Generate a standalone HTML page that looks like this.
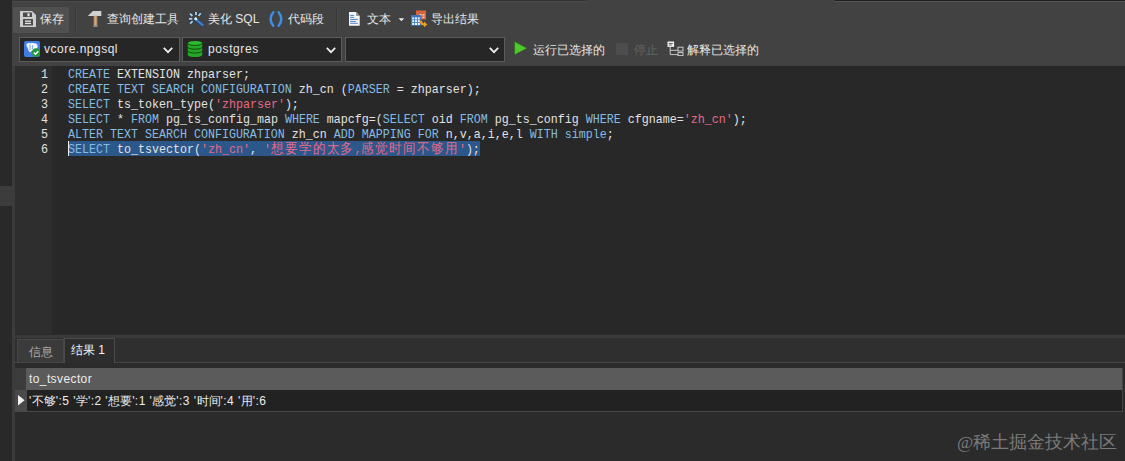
<!DOCTYPE html>
<html><head><meta charset="utf-8">
<style>
*{margin:0;padding:0;box-sizing:border-box}
html,body{width:1125px;height:461px;overflow:hidden;background:#2b2b2b;font-family:"Liberation Sans",sans-serif;position:relative}
.abs{position:absolute}
svg{position:absolute;display:block}
#left{left:0;top:0;width:12px;height:461px;background:#292929}
#leftthumb{left:0;top:186px;width:12px;height:20px;background:#3c3c3c}
#leftline{left:12px;top:0;width:3px;height:461px;background:#3b3b3b}
#tb{left:12px;top:0;width:1113px;height:66px;background:#424242}
#tbtop{left:12px;top:0;width:574px;height:1px;background:#333333;box-shadow:0 1px 0 #4a4a4a}
#tbtop2{left:835px;top:0;width:290px;height:1px;background:#1e1e1e;box-shadow:0 1px 0 #555}
.t{position:absolute;color:#e6e6e6;font-size:12px;line-height:14px;white-space:nowrap}
#save{left:13px;top:7px;width:56px;height:26px;background:#505050}
.sep{position:absolute;top:7px;width:1px;height:26px;background:#393939;box-shadow:1px 0 0 #484848}
.combo{position:absolute;top:37px;height:25px;background:#262626;border:1px solid #5c5c5c}
.chev{position:absolute;top:5px;width:7px;height:7px;border-right:1.5px solid #dcdcdc;border-bottom:1.5px solid #dcdcdc;transform:rotate(45deg)}
#editor{left:15px;top:66px;width:1110px;height:269px;background:#282828}
#gutter{left:15px;top:66px;width:37px;height:269px;background:#2e2e2e}
.code{position:absolute;left:68px;font-family:"Liberation Mono",monospace;font-size:11.67px;line-height:15px;color:#e2e2e2;white-space:pre;transform:scaleY(1.12);transform-origin:0 0}
.ln{position:absolute;left:41px;font-family:"Liberation Mono",monospace;font-size:11.67px;line-height:15px;color:#e2e2e2;transform:scaleY(1.12);transform-origin:0 0}
.k{color:#84bce4}
.s{color:#e5698a}
i.a{font-style:normal;letter-spacing:0.45px}
.cj{font-size:12.5px;letter-spacing:0.92px}
#bottom{left:15px;top:334px;width:1110px;height:127px;background:#2b2b2b}
#band{left:15px;top:335px;width:1110px;height:3px;background:#3a3a3a}
#tabstrip{left:15px;top:338px;width:1110px;height:24px;background:#2f2f2f}
</style></head><body>
<div class="abs" id="left"></div>
<div class="abs" id="leftthumb"></div>
<div class="abs" id="leftline"></div>
<div class="abs" id="tb"></div>
<div class="abs" id="tbtop"></div>
<div class="abs" id="tbtop2"></div>
<div class="abs" id="save"></div>

<!-- floppy -->
<svg style="left:20px;top:11px" width="16" height="16" viewBox="0 0 16 16">
<path d="M0 0H12L16 4V16H0Z" fill="#cdcdcd"/>
<rect x="3" y="1.5" width="9" height="4.5" fill="#4c4c4c"/>
<rect x="7.5" y="2.3" width="2" height="3" fill="#eeeeee"/>
<rect x="3" y="8" width="10" height="6.5" fill="#4c4c4c"/>
<rect x="5" y="9.5" width="6" height="1.3" fill="#e8e8e8"/>
<rect x="5" y="11.8" width="6" height="1.3" fill="#e8e8e8"/>
</svg>
<div class="t" style="left:40px;top:12px">保存</div>
<div class="sep" style="left:75px"></div>

<!-- hammer -->
<svg style="left:88px;top:11px" width="14" height="16" viewBox="0 0 14 16">
<path d="M0 4.8L5 0H13.3V4.9H0Z" fill="#d2d2d2"/>
<rect x="5.6" y="4.9" width="3.8" height="10.9" fill="#a98660"/>
<rect x="6.4" y="4.9" width="2" height="10.9" fill="#cfa878"/>
<rect x="5.6" y="14.3" width="3.8" height="1.7" fill="#8a8a8a"/>
</svg>
<div class="t" style="left:107px;top:12px">查询创建工具</div>

<!-- wand -->
<svg style="left:184px;top:6px" width="24" height="24" viewBox="0 0 24 24">
<g stroke="#1c2a38" stroke-width="3.4" stroke-linecap="butt" opacity="0.6">
<line x1="12" y1="6" x2="12" y2="9"/>
<line x1="5" y1="12.8" x2="8.3" y2="12.8"/>
<line x1="6" y1="7.6" x2="8.4" y2="10"/>
<line x1="16.8" y1="7.4" x2="14.4" y2="9.8"/>
<line x1="6.2" y1="17.6" x2="8.6" y2="15.2"/>
</g>
<g stroke="#a6d2f0" stroke-width="1.9" stroke-linecap="butt">
<line x1="12" y1="6" x2="12" y2="9"/>
<line x1="5" y1="12.8" x2="8.3" y2="12.8"/>
<line x1="6" y1="7.6" x2="8.4" y2="10"/>
<line x1="16.8" y1="7.4" x2="14.4" y2="9.8"/>
<line x1="6.2" y1="17.6" x2="8.6" y2="15.2"/>
</g>
<line x1="10.6" y1="12.2" x2="19.2" y2="19.6" stroke="#1a3350" stroke-width="3.8"/>
<line x1="10.6" y1="12.2" x2="19.2" y2="19.6" stroke="#3b7fcc" stroke-width="2.6"/>
<circle cx="11.8" cy="12.8" r="1.5" fill="#e4f4ff"/>
</svg>
<div class="t" style="left:208px;top:12px">美化 SQL</div>

<!-- parens -->
<svg style="left:262px;top:6px" width="28" height="24" viewBox="0 0 28 24">
<path d="M11.3 6.2Q5.8 13 11.3 19.8" stroke="#3d8fe4" stroke-width="2.5" stroke-linecap="round" fill="none"/>
<path d="M16.6 6.2Q22.1 13 16.6 19.8" stroke="#3d8fe4" stroke-width="2.5" stroke-linecap="round" fill="none"/>
</svg>
<div class="t" style="left:288px;top:12px">代码段</div>
<div class="sep" style="left:336px"></div>

<!-- doc -->
<svg style="left:349px;top:12px" width="11" height="14" viewBox="0 0 11 14">
<path d="M0 0H7L10.7 3.9V13.8H0Z" fill="#f4f6f8"/>
<path d="M7 0V3.9H10.7Z" fill="#9a9a9a"/>
<g fill="#4c86c6">
<rect x="1.1" y="2.9" width="4" height="1"/>
<rect x="1.1" y="4.9" width="4" height="1"/>
<rect x="1.1" y="6.9" width="7.8" height="1"/>
<rect x="1.1" y="8.9" width="5.8" height="1"/>
<rect x="1.1" y="10.8" width="7.8" height="1"/>
</g>
</svg>
<div class="t" style="left:367px;top:12px">文本</div>
<svg style="left:398px;top:18px" width="7" height="4" viewBox="0 0 7 4"><path d="M0.6 0.2H6.2L3.4 3.2Z" fill="#ececec"/></svg>

<!-- export -->
<svg style="left:410px;top:10px" width="18" height="17" viewBox="0 0 18 17">
<rect x="6" y="0.5" width="10" height="9" fill="#d9643c"/>
<g fill="#f2d0c0"><rect x="9.5" y="4" width="2" height="1.6"/><rect x="12.5" y="4" width="2" height="1.6"/><rect x="12.5" y="6.6" width="2" height="1.6"/></g>
<rect x="1" y="5" width="9.8" height="10.8" fill="#3b78c4"/>
<g fill="#e8f4ff">
<rect x="2.2" y="7.4" width="2" height="2"/><rect x="5" y="7.4" width="2" height="2"/><rect x="7.8" y="7.4" width="2" height="2"/>
<rect x="2.2" y="10.2" width="2" height="2"/><rect x="5" y="10.2" width="2" height="2"/><rect x="7.8" y="10.2" width="2" height="2"/>
<rect x="2.2" y="13" width="2" height="2"/><rect x="5" y="13" width="2" height="2"/><rect x="7.8" y="13" width="2" height="2"/>
</g>
<path d="M11 10.8Q11 14.6 14.6 14.6" stroke="#f0a020" stroke-width="2.2" fill="none"/><path d="M14 11.6L17.4 14.6L14 17.2Z" fill="#f0a020"/>
</svg>
<div class="t" style="left:431px;top:12px">导出结果</div>

<!-- combos -->
<div class="combo" style="left:19px;width:161px"><svg style="left:143px;top:9px" width="10" height="7" viewBox="0 0 10 7"><path d="M0.8 0.8L5 5.2L9.2 0.8" stroke="#f0f0f0" stroke-width="1.7" fill="none"/></svg></div>
<svg style="left:24px;top:41px" width="16" height="16" viewBox="0 0 16 16">
<rect x="0" y="0" width="16" height="16" rx="2" fill="#3f7de6"/>
<path d="M2.5 3Q4 1.5 6.5 2.2Q8 1.5 10 2.3Q13 2 13.6 4.5Q14 6 12.5 8L10 9.5Q8.5 11 7.5 10Q6.5 12 5.5 11Q4 9 3.5 6.5Q2 5 2.5 3Z" fill="#f2f6fc"/>
<path d="M6 3.5V9M8.4 4.2V8.2" stroke="#5a8fe0" stroke-width="0.8"/>
<circle cx="12" cy="11.6" r="4.3" fill="#1f9a3a"/>
<path d="M9.8 11.6L11.4 13.2L14.3 10.2" stroke="#ffffff" stroke-width="1.5" fill="none"/>
</svg>
<div class="t" style="left:44px;top:42px;letter-spacing:0.5px">vcore.npgsql</div>

<div class="combo" style="left:182px;width:160px"><svg style="left:143px;top:9px" width="10" height="7" viewBox="0 0 10 7"><path d="M0.8 0.8L5 5.2L9.2 0.8" stroke="#f0f0f0" stroke-width="1.7" fill="none"/></svg></div>
<svg style="left:187px;top:41px" width="16" height="17" viewBox="0 0 16 17">
<path d="M0.8 2.3A7.2 2.3 0 0 1 15.2 2.3V13.8A7.2 2.3 0 0 1 0.8 13.8Z" fill="#23a823"/>
<ellipse cx="8" cy="2.3" rx="7.2" ry="2.1" fill="#2fbd2f"/>
<g stroke="#0f400f" stroke-width="0.9" fill="none">
<path d="M0.8 2.3A7.2 2.1 0 0 0 15.2 2.3"/>
<path d="M0.8 6.1A7.2 2.1 0 0 0 15.2 6.1"/>
<path d="M0.8 9.9A7.2 2.1 0 0 0 15.2 9.9"/>
</g>
</svg>
<div class="t" style="left:208px;top:42px;letter-spacing:0.6px">postgres</div>

<div class="combo" style="left:345px;width:160px"><svg style="left:143px;top:9px" width="10" height="7" viewBox="0 0 10 7"><path d="M0.8 0.8L5 5.2L9.2 0.8" stroke="#f0f0f0" stroke-width="1.7" fill="none"/></svg></div>

<svg style="left:514px;top:41px" width="14" height="15" viewBox="0 0 14 15">
<path d="M0.6 0.6L13 7.2L0.6 13.8Z" fill="#52c830" stroke="#2a6a18" stroke-width="0.6"/>
</svg>
<div class="t" style="left:533px;top:43px">运行已选择的</div>
<div class="abs" style="left:616px;top:43px;width:12px;height:12px;background:#4d4d4d"></div>
<div class="t" style="left:634px;top:43px;color:#646464">停止</div>

<svg style="left:667px;top:41px" width="17" height="15" viewBox="0 0 17 15">
<rect x="0.5" y="0.5" width="6.6" height="5.4" fill="#f0f0f0"/>
<rect x="1.8" y="2" width="4" height="0.9" fill="#555"/>
<rect x="1.8" y="3.6" width="3" height="0.9" fill="#555"/>
<path d="M3.2 6V13.6H11M3.2 9.3H11" stroke="#d8d8d8" stroke-width="0.9" fill="none"/>
<rect x="11" y="6.2" width="5" height="3.8" fill="none" stroke="#d8d8d8" stroke-width="0.9"/>
<rect x="11" y="11.6" width="5" height="3" fill="none" stroke="#d8d8d8" stroke-width="0.9"/>
</svg>
<div class="t" style="left:687px;top:43px">解释已选择的</div>

<div class="abs" id="editor"></div>
<div class="abs" id="gutter"></div>

<div class="ln" style="top:67px">1</div>
<div class="ln" style="top:82px">2</div>
<div class="ln" style="top:97px">3</div>
<div class="ln" style="top:112px">4</div>
<div class="ln" style="top:127px">5</div>
<div class="ln" style="top:142px">6</div>

<div class="code" style="top:67px"><span class="k">CREATE</span> EXTENSION zhparser;</div>
<div class="code" style="top:82px"><span class="k">CREATE TEXT SEARCH CONFIGURATION</span> zh_cn (<span class="k">PARSER</span> = zhparser);</div>
<div class="code" style="top:97px"><span class="k">SELECT</span> ts_token_type(<span class="s">'zhparser'</span>);</div>
<div class="code" style="top:112px"><span class="k">SELECT</span> * <span class="k">FROM</span> pg_ts_config_map <span class="k">WHERE</span> mapcfg=(<span class="k">SELECT</span> oid <span class="k">FROM</span> pg_ts_config <span class="k">WHERE</span> cfgname=<span class="s">'zh_cn'</span>);</div>
<div class="code" style="top:127px"><span class="k">ALTER TEXT SEARCH CONFIGURATION</span> zh_cn <span class="k">ADD MAPPING FOR</span> n,v,a,i,e,l <span class="k">WITH</span> <span class="k">simple</span>;</div>
<div class="abs" style="left:68px;top:141px;width:412px;height:15px;background:#2b578a"></div>
<div class="code" style="top:142px"><span class="k">SELECT</span> to_tsvector(<span class="s">'zh_cn'</span>, <span class="s">'<span class="cj">想要学的太多</span>,<span class="cj">感觉时间不够用</span>'</span>);</div>
<div class="abs" style="left:68px;top:141px;width:1px;height:15px;background:#f0f0f0"></div>

<div class="abs" id="bottom"></div>
<div class="abs" id="band"></div>
<div class="abs" id="tabstrip"></div>

<!-- tabs -->
<div class="abs" style="left:17px;top:339px;width:47px;height:24px;background:#3b3b3b;border:1px solid #474747;border-bottom:none"></div>
<div class="t" style="left:29px;top:345px;color:#a9a9a9">信息</div>
<div class="abs" style="left:14px;top:362px;width:1111px;height:1px;background:#454545"></div>
<div class="abs" style="left:64px;top:338px;width:51px;height:25px;background:#2d2d2d;border:1px solid #4a4a4a;border-bottom:none"></div>
<div class="t" style="left:71px;top:343px;color:#f4f4f4">结果 1</div>

<!-- grid -->
<div class="abs" style="left:15px;top:368px;width:1108px;height:44px;border:1px solid #474747;border-top:none;background:#222"></div>
<div class="abs" style="left:15px;top:368px;width:12px;height:22px;background:#3c3c3c"></div>
<div class="abs" style="left:26px;top:368px;width:1096px;height:22px;background:#5b5b5b"></div>
<div class="t" style="left:29px;top:372px;color:#ececec;letter-spacing:0.4px">to_tsvector</div>
<div class="abs" style="left:15px;top:390px;width:12px;height:21px;background:#4a4a4a"></div>
<svg style="left:18px;top:395px" width="7" height="11" viewBox="0 0 7 11"><path d="M0 0L6.6 5.2L0 10.4Z" fill="#f4f4f4"/></svg>
<div class="abs" style="left:27px;top:390px;width:1095px;height:21px;background:#222222"></div>
<div class="t" style="left:29px;top:394px;color:#ececec"><i class="a">'</i>不够<i class="a">':5 '</i>学<i class="a">':2 '</i>想要<i class="a">':1 '</i>感觉<i class="a">':3 '</i>时间<i class="a">':4 '</i>用<i class="a">':6</i></div>

<div class="t" style="left:957px;top:432px;font-family:'Liberation Serif',serif;font-size:17.6px;line-height:20px;color:#7a7a7a">@稀土掘金技术社区</div>

</body></html>
